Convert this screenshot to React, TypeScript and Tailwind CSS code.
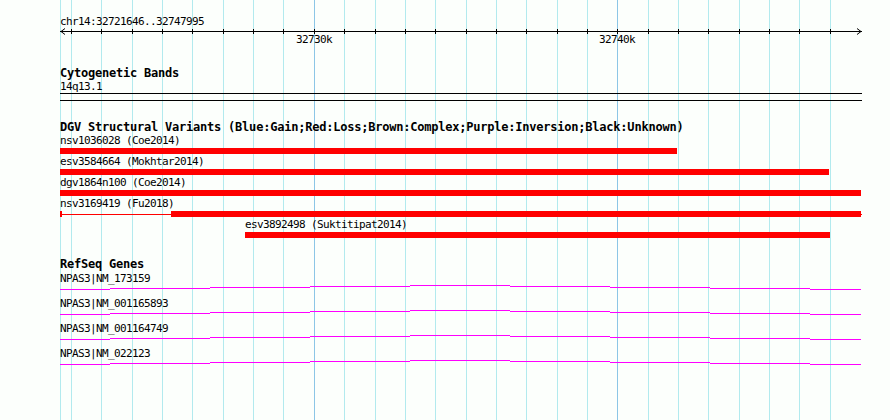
import React from "react";

const GRID = [71, 101, 132, 162, 192, 223, 253, 283, 314, 344, 375, 405, 435, 466, 496, 526, 557, 587, 617, 648, 678, 708, 739, 769, 799, 830];
const MAJOR = new Set([314, 617]);

const regular = "font-['DejaVu_Sans_Mono','Liberation_Mono',monospace] text-[11px] tracking-[-0.62px] leading-[13px] h-[13px] text-black whitespace-nowrap";
const bold = "font-['DejaVu_Sans_Mono','Liberation_Mono',monospace] font-bold text-[12px] tracking-[-0.22px] leading-[13px] h-[13px] text-black whitespace-nowrap";

function Grid() {
  return (
    <svg className="absolute inset-0" width={890} height={420}>
      <rect x={60} y={0} width={1} height={420} fill="#b2eaee" />
      {GRID.map((x) => (
        <rect key={x} x={x} y={0} width={1} height={420} fill={MAJOR.has(x) ? "#8cc6e6" : "#b2eaee"} />
      ))}
    </svg>
  );
}

function Ruler() {
  // svg spans x 60..862, y 28..46
  return (
    <svg width={803} height={18} className="block">
      <rect x={0} y={3} width={802} height={1} fill="#000" />
      {GRID.map((x) => (
        <rect key={x} x={x - 60} y={1} width={1} height={5} fill="#000" />
      ))}
      <path d="M5 0.5 L1 3.5 L5 6.5" stroke="#000" strokeWidth={1} fill="none" />
      <path d="M797 0.5 L801 3.5 L797 6.5" stroke="#000" strokeWidth={1} fill="none" />
      <text x={314 - 60} y={15} textAnchor="middle" fontFamily="DejaVu Sans Mono, Liberation Mono, monospace" fontSize={11} letterSpacing={-0.62} fill="#000">32730k</text>
      <text x={617 - 60} y={15} textAnchor="middle" fontFamily="DejaVu Sans Mono, Liberation Mono, monospace" fontSize={11} letterSpacing={-0.62} fill="#000">32740k</text>
    </svg>
  );
}

type Variant = { label: string; offset: number; width: number; split?: boolean };
const VARIANTS: Variant[] = [
  { label: "nsv1036028 (Coe2014)", offset: 0, width: 617 },
  { label: "esv3584664 (Mokhtar2014)", offset: 0, width: 769 },
  { label: "dgv1864n100 (Coe2014)", offset: 0, width: 801 },
  { label: "nsv3169419 (Fu2018)", offset: 0, width: 801, split: true },
  { label: "esv3892498 (Suktitipat2014)", offset: 185, width: 585 },
];

function VariantRow({ v }: { v: Variant }) {
  return (
    <div className="h-[21px]">
      <div className={regular} style={{ marginLeft: v.offset }}>{v.label}</div>
      {v.split ? (
        <div className="mt-[1px] h-[6px] flex items-center">
          <div className="w-[2px] h-[6px] bg-[#ff0000]" />
          <div className="w-[109px] h-px bg-[#ff0000]" />
          <div className="w-[690px] h-[6px] bg-[#ff0000]" />
          <div className="w-px h-px bg-[#ff0000]" />
        </div>
      ) : (
        <div className="mt-[1px] h-[6px] bg-[#ff0000]" style={{ marginLeft: v.offset, width: v.width }} />
      )}
    </div>
  );
}

const GENES = ["NPAS3|NM_173159", "NPAS3|NM_001165893", "NPAS3|NM_001164749", "NPAS3|NM_022123"];
const SEGMENTS: [number, number, number][] = [
  [60, 110, 0],
  [110, 210, 1],
  [210, 310, 2],
  [310, 410, 3],
  [410, 510, 4],
  [510, 610, 3],
  [610, 710, 2],
  [710, 810, 1],
  [810, 861, 0],
];

function GeneRow({ name }: { name: string }) {
  return (
    <div className="h-[25px]">
      <div className={regular}>{name}</div>
      <svg width={802} height={12} className="block">
        {SEGMENTS.map(([a, b, lvl]) => (
          <rect key={a} x={a - 60} y={4 - lvl} width={b - a} height={1} fill="#ff00ff" />
        ))}
      </svg>
    </div>
  );
}

export default function App() {
  return (
    <div className="relative w-[890px] h-[420px] overflow-hidden bg-[#fcfffc]">
      <Grid />
      <div className="relative pl-[60px] pt-[15px] flex flex-col">
        <div className={regular}>chr14:32721646..32747995</div>
        <Ruler />
        <div className={`${bold} mt-[21px]`}>Cytogenetic Bands</div>
        <div className={regular}>14q13.1</div>
        <div className="w-[802px] h-[8px] border-t border-b border-black" />
        <div className={`${bold} mt-[20px]`}>
          DGV Structural Variants (Blue:Gain;Red:Loss;Brown:Complex;Purple:Inversion;Black:Unknown)
        </div>
        <div className="flex flex-col">
          {VARIANTS.map((v) => (
            <VariantRow key={v.label} v={v} />
          ))}
        </div>
        <div className={`${bold} mt-[19px]`}>RefSeq Genes</div>
        <div className="mt-[1px] flex flex-col">
          {GENES.map((g) => (
            <GeneRow key={g} name={g} />
          ))}
        </div>
      </div>
    </div>
  );
}
